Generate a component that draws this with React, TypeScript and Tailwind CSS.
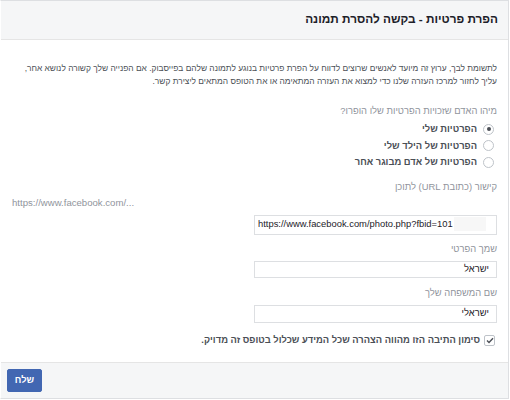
const font = { fontFamily: '"Liberation Sans", Arial, sans-serif' };

const Radio = ({ checked, label }: { checked?: boolean; label: string }) => (
  <label className="flex h-[16.5px] items-center">
    <span className="ml-[1px] mr-[3px] flex h-[11px] w-[11px] shrink-0 items-center justify-center rounded-full border border-[#bec3c9] bg-white">
      {checked && <span className="h-[4px] w-[4px] rounded-full bg-[#4b4f56]" />}
    </span>
    <span className="mr-[5px] text-[9.4px] font-bold text-[#4b4f56]">{label}</span>
  </label>
);

const Field = ({ children, h }: { children: React.ReactNode; h: string }) => (
  <div className={`flex w-[243px] items-center overflow-hidden border border-[#dddfe2] bg-white px-[3px] ${h}`}>
    {children}
  </div>
);

function App() {
  return (
    <div className="h-[400px] w-[510px] bg-white" style={font}>
      <div dir="rtl" className="mr-[1px] border-x border-t border-b border-[#dddfe2] border-l-transparent">
        <div className="flex h-[39px] items-center border-b border-[#e5e5e5] bg-[#f5f6f7] pr-[10px]">
          <h1 className="text-[11.8px] font-bold text-[#1d2129]">הפרת פרטיות - בקשה להסרת תמונה</h1>
        </div>

        <div className="px-[11px] pb-[14px] pt-[22px]">
          <p className="text-[8.4px] leading-[13px] text-[#4b4f56]">
            לתשומת לבך, ערוץ זה מיועד לאנשים שרוצים לדווח על הפרת פרטיות בנוגע לתמונה שלהם בפייסבוק. אם הפנייה שלך קשורה לנושא אחר,
            <br />
            עליך לחזור למרכז העזרה שלנו כדי למצוא את העזרה המתאימה או את הטופס המתאים ליצירת קשר.
          </p>

          <div className="mt-[16px] text-[9.4px] leading-[14px] text-[#90949c]">מיהו האדם שזכויות הפרטיות שלו הופרו?</div>
          <div className="mt-[3px]">
            <Radio checked label="הפרטיות שלי" />
            <Radio label="הפרטיות של הילד שלי" />
            <Radio label="הפרטיות של אדם מבוגר אחר" />
          </div>

          <div className="mt-[9px] text-[9.4px] leading-[14px] text-[#90949c]">קישור (כתובת URL) לתוכן</div>
          <div dir="ltr" className="mt-[2px] text-left text-[9.6px] leading-[14px] text-[#90949c]">https://www.facebook.com/...</div>
          <div className="mt-[5px]">
            <Field h="h-[20px]">
              <div dir="ltr" className="flex w-full items-center whitespace-nowrap text-[9.4px] text-[#1d2129]">
                <span>https://www.facebook.com/photo.php?fbid=101</span>
                <span className="ml-[1px] h-[14px] w-[32px] bg-[#f7f7f7]" />
              </div>
            </Field>
          </div>

          <div className="mt-[7px] text-[9.4px] leading-[14px] text-[#90949c]">שמך הפרטי</div>
          <div className="mt-[5px]">
            <Field h="h-[17px]">
              <span className="pr-[4px] text-[9.4px] text-[#1d2129]">ישראל</span>
            </Field>
          </div>

          <div className="mt-[8px] text-[9.4px] leading-[14px] text-[#90949c]">שם המשפחה שלך</div>
          <div className="mt-[5px]">
            <Field h="h-[18px]">
              <span className="pr-[4px] text-[9.4px] text-[#1d2129]">ישראלי</span>
            </Field>
          </div>

          <label className="mt-[11px] flex h-[14px] items-center">
            <span className="mr-[2px] flex h-[11px] w-[11px] items-center justify-center rounded-[2px] border border-[#bec3c9] bg-white">
              <svg width="8" height="7" viewBox="0 0 8 7">
                <path d="M1 3.6 L3 5.5 L7 1.2" fill="none" stroke="#4b4f56" strokeWidth="1.4" />
              </svg>
            </span>
            <span className="mr-[4px] text-[9.4px] font-bold text-[#4b4f56]">סימון התיבה הזו מהווה הצהרה שכל המידע שכלול בטופס זה מדויק.</span>
          </label>
        </div>

        <div className="flex border-t border-[#e5e5e5] bg-[#f5f6f7] py-[6px] pl-[6px]" dir="ltr">
          <button className="flex h-[23px] w-[35px] items-center justify-center rounded-[2px] border border-[#4267b2] bg-[#4267b2] text-[9.4px] font-bold text-white">
            שלח
          </button>
        </div>
      </div>
    </div>
  );
}

export default App;
